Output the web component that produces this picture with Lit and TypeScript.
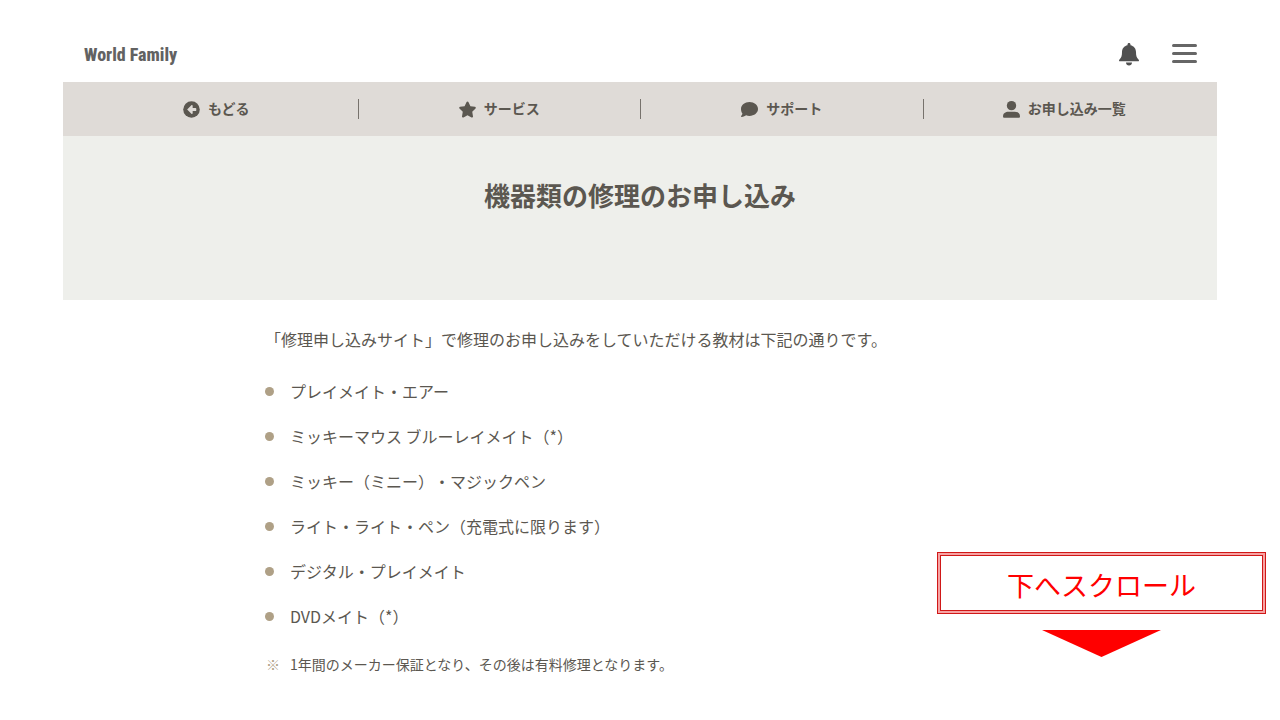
import { LitElement, html, css, svg } from "lit";
import { customElement } from "lit/decorators.js";

const backIcon = html`<svg class="icon" viewBox="0 0 16 16" aria-hidden="true">
  <circle cx="8" cy="8" r="7.8" />
  <path class="cut" d="M7.9 3.9 3.9 8l4 4.1c.5.5 1.2.2 1.2-.5V9.5h2.6c.5 0 .8-.3.8-.8V7.3c0-.5-.3-.8-.8-.8H9.1V4.4c0-.7-.7-1-1.2-.5z" />
</svg>`;

const starIcon = html`<svg class="icon" viewBox="18 0 540 512" aria-hidden="true">
  <path d="M316.9 18C311.6 7 300.4 0 288.1 0s-23.4 7-28.8 18L195 150.3 51.4 171.5c-12 1.8-22 10.2-25.7 21.7s-.7 24.2 7.9 32.7L137.8 329 113.2 474.7c-2 12 3 24.2 12.9 31.3s23 8 33.8 2.3l128.3-68.5 128.3 68.5c10.8 5.7 23.9 4.9 33.8-2.3s14.9-19.3 12.9-31.3L438.5 329 542.7 225.9c8.6-8.5 11.7-21.2 7.9-32.7s-13.7-19.9-25.7-21.7L381.2 150.3 316.9 18z" />
</svg>`;

const commentIcon = html`<svg class="icon" viewBox="0 0 512 512" aria-hidden="true">
  <path d="M512 240c0 114.9-114.6 208-256 208-37.1 0-72.3-6.4-104.1-17.9-11.9 8.7-31.3 20.6-54.3 30.6C73.6 471.1 44.7 480 16 480c-6.5 0-12.3-3.9-14.8-9.9-2.5-6-1.1-12.8 3.4-17.4 12-12.2 31-37.5 40.3-67.4C16.9 345.5 0 294.6 0 240 0 125.1 114.6 32 256 32s256 93.1 256 208z" />
</svg>`;

const userIcon = html`<svg class="icon" viewBox="0 0 16 16" aria-hidden="true">
  <circle cx="8" cy="4.4" r="4.4" />
  <path d="M0 14.5c0-3 2.300-4.400 5.200-4.400h5.600c2.900 0 5.200 1.400 5.200 4.400 0 .7-.5 1.200-1.300 1.200H1.300c-.8 0-1.300-.5-1.300-1.200z" />
</svg>`;

const bellShape = svg`<path d="M10 0c.9 0 1.5.6 1.5 1.5v.7c3.4.7 5.5 3.4 5.5 6.9 0 4 .6 5.8 2.5 7.3.3.3.5.6.5 1 0 .5-.4.9-1 .9H1c-.6 0-1-.4-1-.9 0-.4.2-.7.5-1C2.4 14.9 3 13.1 3 9.1c0-3.5 2.1-6.2 5.5-6.9v-.7C8.5.6 9.1 0 10 0zM7 19.6h6c0 1.8-1.3 3-3 3s-3-1.2-3-3z" />`;

const navItems = [
  { label: "もどる", icon: backIcon },
  { label: "サービス", icon: starIcon },
  { label: "サポート", icon: commentIcon },
  { label: "お申し込み一覧", icon: userIcon },
];

const products = [
  "プレイメイト・エアー",
  "ミッキーマウス ブルーレイメイト（*）",
  "ミッキー（ミニー）・マジックペン",
  "ライト・ライト・ペン（充電式に限ります）",
  "デジタル・プレイメイト",
  "DVDメイト（*）",
];

@customElement("app-root")
export class AppRoot extends LitElement {
  static styles = css`
    :host {
      display: block;
      min-height: 100vh;
      padding: 0 63px;
      box-sizing: border-box;
      background: #fff;
      color: #5b5750;
      font-family: "Noto Sans CJK JP", sans-serif;
      font-size: 16px;
      line-height: 29px;
      text-spacing-trim: space-all;
    }
    a {
      color: inherit;
      text-decoration: none;
    }
    svg {
      display: block;
      fill: currentColor;
    }
    .header {
      display: flex;
      align-items: center;
      justify-content: space-between;
      height: 82px;
      padding: 26px 20px 0 21px;
      box-sizing: border-box;
      color: #505050;
    }
    .logo {
      font-family: "Roboto Condensed", "Liberation Sans Narrow", "Open Sans Condensed", sans-serif;
      font-size: 18px;
      font-weight: 800;
      color: #626262;
    }
    .tools {
      display: flex;
      align-items: center;
      gap: 32px;
    }
    .tool {
      padding: 0;
      border: 0;
      background: none;
      color: inherit;
    }
    .bell {
      width: 22px;
      height: 23px;
    }
    .menu {
      width: 25px;
      height: 20px;
      color: #666;
    }
    .nav {
      display: grid;
      grid-template-columns: repeat(4, 1fr);
      align-items: center;
      height: 54px;
      padding: 0 12px;
      background: #dfdbd7;
    }
    .nav-link {
      display: flex;
      align-items: center;
      justify-content: center;
      gap: 8px;
      height: 20px;
      font-size: 14px;
      line-height: 28px;
      font-weight: 700;
    }
    .nav-link + .nav-link {
      border-left: 1px solid #77726c;
    }
    .label {
      padding-bottom: 2px;
    }
    .icon {
      width: 17px;
      height: 17px;
    }
    .cut {
      fill: #dfdbd7;
    }
    .hero {
      padding: 39px 20px 85px;
      background: #eeefeb;
      text-align: center;
    }
    .title {
      margin: 0;
      font-size: 26px;
      line-height: 40px;
      font-weight: 700;
    }
    .content {
      max-width: 750px;
      margin: 0 auto;
      padding: 25px 0 40px;
    }
    .intro {
      margin: 0 0 23px;
    }
    .list {
      display: grid;
      gap: 16px;
      margin: 0 0 21px;
      padding: 0;
      list-style: none;
    }
    .item,
    .note {
      display: grid;
      grid-template-columns: 25px 1fr;
      align-items: center;
    }
    .item::before {
      content: "";
      width: 9px;
      height: 9px;
      border-radius: 50%;
      background: #afa086;
    }
    .note {
      margin: 0;
      font-size: 14px;
      line-height: 24px;
    }
    .mark {
      padding-left: 1px;
      color: #afa086;
    }
    .scroll {
      position: fixed;
      right: 14px;
      bottom: 63px;
      display: grid;
      justify-items: center;
      gap: 16px;
      width: 329px;
      color: #f00;
    }
    .scroll-label {
      width: 100%;
      box-sizing: border-box;
      padding: 12px 10px 8px;
      border: 1px solid #d01818;
      background: #fff;
      box-shadow: inset 0 0 0 2px #f7a3a3, inset 0 0 0 3px #d01818;
      font-size: 27px;
      line-height: 40px;
      text-align: center;
    }
    .arrow {
      width: 119px;
      height: 27px;
    }
  `;

  render() {
    return html`
      <header class="header">
        <a class="logo" href="#">World Family</a>
        <div class="tools">
          <button class="tool" aria-label="お知らせ">
            <svg class="bell" viewBox="-1 0 22 23" aria-hidden="true">${bellShape}</svg>
          </button>
          <button class="tool" aria-label="メニュー">
            <svg class="menu" viewBox="0 0 25 20" aria-hidden="true">
              <rect y="0" width="25" height="3" rx="1.5" />
              <rect y="8" width="25" height="3" rx="1.5" />
              <rect y="16" width="25" height="3" rx="1.5" />
            </svg>
          </button>
        </div>
      </header>
      <nav class="nav">
        ${navItems.map((n) => html`<a class="nav-link" href="#">${n.icon}<span class="label">${n.label}</span></a>`)}
      </nav>
      <section class="hero">
        <h1 class="title">機器類の修理のお申し込み</h1>
      </section>
      <main class="content">
        <p class="intro">「修理申し込みサイト」で修理のお申し込みをしていただける教材は下記の通りです。</p>
        <ul class="list">
          ${products.map((p) => html`<li class="item">${p}</li>`)}
        </ul>
        <p class="note" id="note">
          <span class="mark">※</span>
          <span>1年間のメーカー保証となり、その後は有料修理となります。</span>
        </p>
      </main>
      <a class="scroll" href="#note">
        <span class="scroll-label">下へスクロール</span>
        <svg class="arrow" viewBox="0 0 119 27" aria-hidden="true"><path d="M0 0h119L59.5 27z" /></svg>
      </a>
    `;
  }
}
